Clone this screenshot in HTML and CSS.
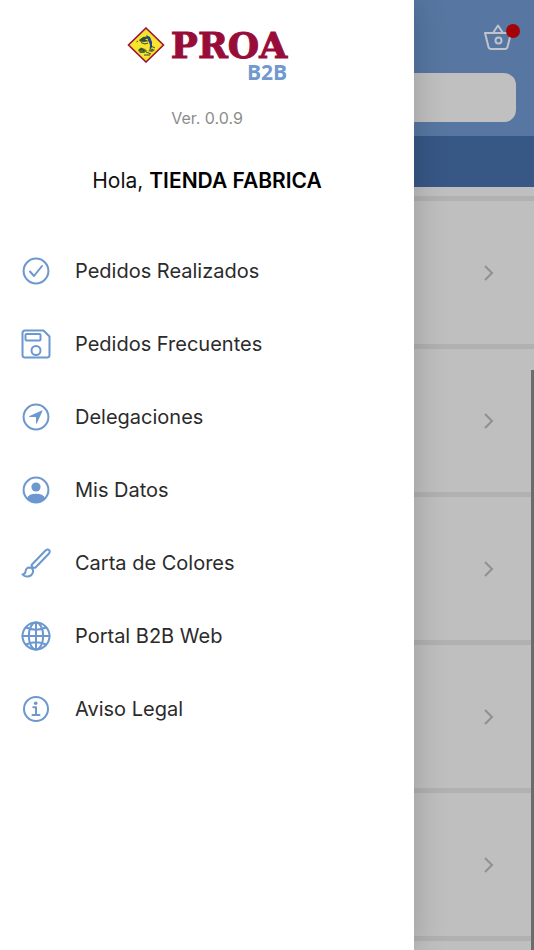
FILE: index.html
```html
<!DOCTYPE html>
<html lang="es">
<head>
<meta charset="utf-8">
<meta name="viewport" content="width=device-width, initial-scale=1">
<title>PROA B2B</title>
<link rel="stylesheet" href="styles.css">
</head>
<body>
<div class="screen">
  <main class="app">
    <header class="topbar">
      <button class="basket" type="button" aria-label="Cesta">
        <svg viewBox="0 0 30 28" width="30" height="28" fill="none" stroke="currentColor" stroke-width="2" stroke-linejoin="round" stroke-linecap="round"><path d="M2 9H28L24.500 23Q24 25 22 25H8Q6 25 5.500 23ZM10 9L15 1.500L20 9"/><circle cx="15.500" cy="16.500" r="3"/></svg>
        <span class="badge"></span>
      </button>
      <input class="search" type="search" aria-label="Buscar">
    </header>
    <div class="subbar"></div>
    <div class="rows">
      <a class="row" href="#" aria-label="Abrir"><svg class="chevron" viewBox="0 0 12 18"><path d="M2 2L9 9L2 16"/></svg></a>
      <a class="row" href="#" aria-label="Abrir"><svg class="chevron" viewBox="0 0 12 18"><path d="M2 2L9 9L2 16"/></svg></a>
      <a class="row" href="#" aria-label="Abrir"><svg class="chevron" viewBox="0 0 12 18"><path d="M2 2L9 9L2 16"/></svg></a>
      <a class="row" href="#" aria-label="Abrir"><svg class="chevron" viewBox="0 0 12 18"><path d="M2 2L9 9L2 16"/></svg></a>
      <a class="row" href="#" aria-label="Abrir"><svg class="chevron" viewBox="0 0 12 18"><path d="M2 2L9 9L2 16"/></svg></a>
      <a class="row" href="#" aria-label="Abrir"><svg class="chevron" viewBox="0 0 12 18"><path d="M2 2L9 9L2 16"/></svg></a>
    </div>
    <span class="scrollbar"></span>
  </main>

  <aside class="drawer">
    <div class="logo">
      <svg class="emblem" viewBox="0 0 38 36" width="38" height="36">
        <path d="M19 1L36.500 18L19 35L1.500 18Z" fill="#f6e52c" stroke="#9b1238" stroke-width="1.600"/>
        <path d="M12 13L16 10L20 9.500L22 11L18 12.500L22 14L17 15L13 14.500Z" fill="#34503a"/>
        <path d="M19 8L23 10L25 15L25 20L22.500 24L23 18L21 13Z" fill="#24418c"/>
        <path d="M11 23L14 20.500L18 22L20 24L17 26H13ZM21 24L25 21.500L28 23L25 25Z" fill="#5a6a35"/>
        <path d="M11 14L9.500 15M14 15.500L18 17L21 16M12 23L15 21.500L17 24M19 25L24 27M17 28H23M24 19L28 21" fill="none" stroke="#2c3425" stroke-width=".9"/>
      </svg>
      <div class="wordmark"><span class="brand">PROA</span><span class="suffix">B2B</span></div>
    </div>
    <p class="version">Ver. 0.0.9</p>
    <p class="greeting">Hola, <strong>TIENDA FABRICA</strong></p>
    <nav class="menu">
      <a href="#"><svg class="icon" viewBox="0 0 30 30"><circle cx="15" cy="15" r="12.400"/><path d="M9 15.500L13 20L21 10"/></svg>Pedidos Realizados</a>
      <a href="#"><svg class="icon" viewBox="0 0 30 30"><path d="M4 1.500H22.500L28.500 7.500V26Q28.500 28.500 26 28.500H4Q1.500 28.500 1.500 26V4Q1.500 1.500 4 1.500Z"/><rect x="4.500" y="5" width="15" height="6.500" rx="1"/><circle cx="15" cy="21.500" r="4.500"/></svg>Pedidos Frecuentes</a>
      <a href="#"><svg class="icon" viewBox="0 0 30 30"><circle cx="15" cy="15" r="12.400"/><path class="solid" d="M20.800 8.500Q21.800 8.200 21.400 9.200L16 21Q15.300 22.200 15 21V15.500Q15 15 14.500 15H8.500Q7.500 14.700 8.600 14Z"/></svg>Delegaciones</a>
      <a href="#"><svg class="icon" viewBox="0 0 30 30"><circle cx="15" cy="15" r="12.400"/><circle class="solid" cx="15" cy="12" r="4.600"/><path class="solid" d="M6 23Q8 18.800 15 18.800T24 23Q20 27.500 15 27.500T6 23Z"/></svg>Mis Datos</a>
      <a href="#"><svg class="icon" viewBox="0 0 30 30"><path d="M11 16.500L24.500 2.500Q26.500 .800 28 2T28 5.500L14.500 19.500Q13 20.300 11.500 19T11 16.500ZM1.500 26.500Q4.500 26 4.500 23.500Q5 19.500 8.500 19.500Q12.500 20 12 24Q11 28 7 28.500Q3.500 29 1.500 26.500Z"/></svg>Carta de Colores</a>
      <a href="#"><svg class="icon" viewBox="0 0 30 30"><circle cx="15" cy="15" r="13.500"/><ellipse cx="15" cy="15" rx="7.200" ry="13.500"/><path d="M15 1.500V28.500M1.500 15H28.500M5 6.500Q15 11 25 6.500M5 23.500Q15 19 25 23.500"/></svg>Portal B2B Web</a>
      <a href="#"><svg class="icon" viewBox="0 0 30 30"><circle cx="15" cy="15" r="12"/><path d="M12.300 13.300H15V21M11.500 21H18.500"/><circle class="solid" cx="14.700" cy="9.200" r="1.800"/></svg>Aviso Legal</a>
    </nav>
  </aside>
</div>
</body>
</html>
```
FILE: styles.css
```css
* {
  box-sizing: border-box;
}

body {
  margin: 0;
  font-family: Inter, "Liberation Sans", sans-serif;
  background: #bfbfbf;
}

a {
  color: inherit;
  text-decoration: none;
}

.screen {
  display: grid;
  grid-template-columns: minmax(0, 1fr) 120px;
  height: 100vh;
  overflow: hidden;
}

.app {
  grid-area: 1 / 1 / 2 / 3;
  position: relative;
  overflow: hidden;
  background: #bfbfbf;
}

.topbar {
  display: flex;
  flex-direction: column;
  gap: 21px;
  padding: 24px 18px 14px;
  background: #5777a2;
}

.basket {
  position: relative;
  align-self: flex-end;
  width: 33px;
  height: 28px;
  padding: 0;
  border: 0;
  background: none;
  color: #bfc4ca;
  text-align: left;
}

.basket svg {
  display: block;
}

.badge {
  position: absolute;
  top: 0;
  right: -4px;
  width: 14px;
  height: 14px;
  border-radius: 50%;
  background: #a30309;
}

.search {
  width: 100%;
  height: 49px;
  padding: 0 16px;
  border: 0;
  border-radius: 12px;
  background: #c0c0c0;
  font: inherit;
}

.subbar {
  height: 51px;
  margin-bottom: 9px;
  background: #375785;
}

.row {
  display: flex;
  align-items: center;
  justify-content: flex-end;
  height: 148px;
  padding-right: 39px;
  border-top: 5px solid #b1b1b1;
}

.chevron {
  width: 12px;
  height: 18px;
  fill: none;
  stroke: #909090;
  stroke-width: 2;
}

.scrollbar {
  position: absolute;
  top: 370px;
  right: 0;
  bottom: 0;
  width: 3px;
  background: #6a6c6b;
}

.drawer {
  grid-area: 1 / 1 / 2 / 2;
  z-index: 1;
  background: #fff;
  box-shadow: 0 0 32px rgba(0, 0, 0, 0.2);
}

.logo {
  display: flex;
  justify-content: center;
  gap: 6px;
  padding-top: 27px;
}

.wordmark {
  display: flex;
  flex-direction: column;
}

.brand {
  font: bold 36px/37px "DejaVu Serif", serif;
  color: #980c3a;
  -webkit-text-stroke: 1px #980c3a;
}

.suffix {
  align-self: flex-end;
  font: bold 21px/16px "Open Sans", sans-serif;
  color: #7199cf;
}

.version {
  margin: 28px 0 0;
  font-size: 16px;
  line-height: 20px;
  text-align: center;
  color: #8c8c8c;
}

.greeting {
  margin: 40px 0 0;
  font-size: 21px;
  line-height: 26px;
  text-align: center;
  color: #111;
}

.greeting strong {
  font-weight: 600;
  color: #000;
}

.menu {
  display: flex;
  flex-direction: column;
  margin-top: 40px;
}

.menu a {
  display: flex;
  align-items: center;
  gap: 24px;
  height: 73px;
  padding-left: 21px;
  font-size: 20px;
  color: #2b2b2b;
}

.icon {
  width: 30px;
  height: 30px;
  fill: none;
  stroke: #6b98cf;
  stroke-width: 2;
  stroke-linecap: round;
  stroke-linejoin: round;
}

.icon .solid {
  fill: #6b98cf;
  stroke: none;
}
```
